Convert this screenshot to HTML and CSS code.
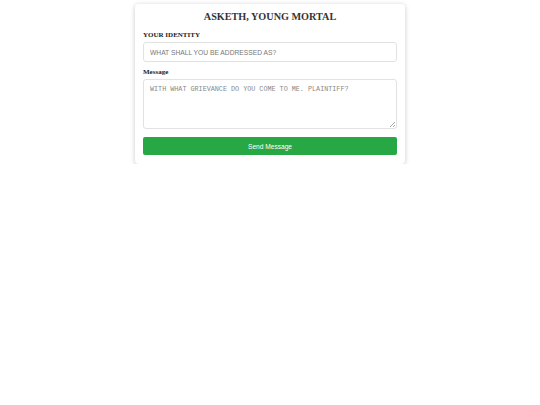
FILE: index.html
```html
<!DOCTYPE html>
<html>
<head>
<meta charset="utf-8">
<link rel="stylesheet" href="styles.css">
</head>
<body>
<div class="card">
  <h1 class="title">ASKETH, YOUNG MORTAL</h1>
  <form class="form">
    <label class="label" for="identity">YOUR IDENTITY</label>
    <input class="input" id="identity" type="text" placeholder="WHAT SHALL YOU BE ADDRESSED AS?">
    <label class="label label-msg" for="msg">Message</label>
    <textarea class="textarea" id="msg" placeholder="WITH WHAT GRIEVANCE DO YOU COME TO ME. PLAINTIFF?"></textarea>
    <button class="button" type="button">Send Message</button>
  </form>
</div>
</body>
</html>
```
FILE: styles.css
```css
html, body {
  margin: 0;
  padding: 0;
  background: #fff;
}
body {
  padding-top: 4px;
  font-family: "Liberation Serif", "Times New Roman", serif;
}
.card {
  width: 270px;
  box-sizing: border-box;
  margin: 0 auto;
  padding: 8px 8px 9px;
  background: #fff;
  border-radius: 4px;
  box-shadow: 0 1px 5px rgba(0,0,0,0.22);
}
.title {
  margin: 0 0 8px;
  text-align: center;
  font-size: 10.2px;
  line-height: 10px;
  font-weight: bold;
  color: #333;
}
.form {
  display: flex;
  flex-direction: column;
}
.label {
  font-size: 7px;
  font-weight: bold;
  color: #222;
  line-height: 10px;
  margin-bottom: 2px;
}
.label-msg {
  margin-top: 5px;
}
.input, .textarea {
  box-sizing: border-box;
  width: 100%;
  border: 1px solid #e2e2e2;
  border-radius: 3px;
  background: #fff;
  margin: 0;
}
.input {
  height: 20px;
  padding: 0 6px;
  font-family: "Liberation Sans", Arial, sans-serif;
  font-size: 6.7px;
}
.input::placeholder {
  color: #777;
}
.textarea {
  display: block;
  height: 50px;
  padding: 5px 6px;
  font-family: "Liberation Mono", "DejaVu Sans Mono", monospace;
  font-size: 6.75px;
  resize: vertical;
}
.textarea::placeholder {
  color: #888;
}
.textarea::-webkit-resizer {
  background: linear-gradient(135deg, transparent 45%, #aaa 45%, #aaa 58%, transparent 58%, transparent 72%, #aaa 72%, #aaa 85%, transparent 85%) no-repeat right 1px bottom 1px / 5px 5px;
}
.button {
  margin-top: 8px;
  height: 18px;
  border: none;
  border-radius: 2px;
  background: #28a745;
  color: #fff;
  font-family: "Liberation Sans", Arial, sans-serif;
  font-size: 6.6px;
  padding: 0;
}
```
